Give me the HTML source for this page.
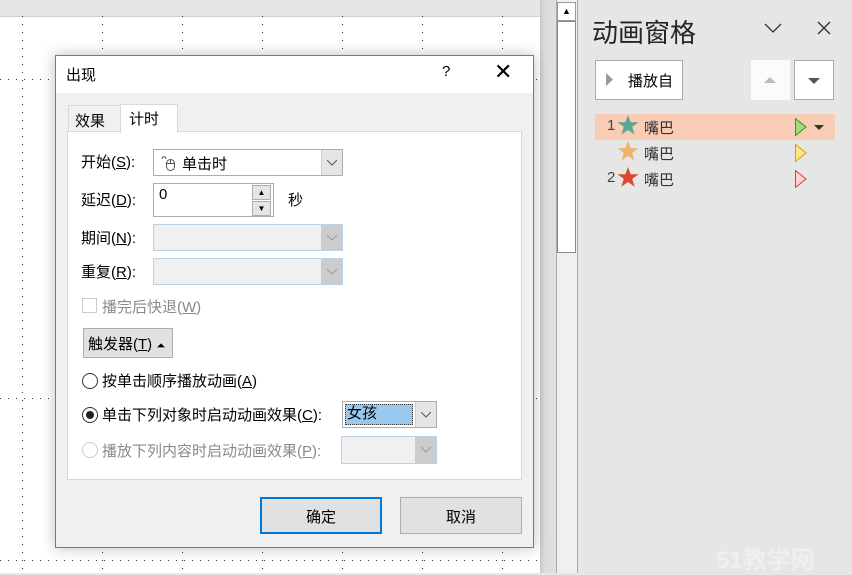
<!DOCTYPE html>
<html><head><meta charset="utf-8"><style>
*{box-sizing:border-box;margin:0;padding:0}
body{width:852px;height:573px;overflow:hidden;background:#e6e6e6;font-family:"Liberation Sans","Noto Sans CJK SC",sans-serif;font-size:15px;color:#000;position:relative}
.a{position:absolute}
u{text-decoration:underline}
.canvas{left:0;top:16px;width:540px;height:557px;background:#fff;border-top:1px solid #d0d0d0}
.vd{width:1px;top:16px;height:557px;background:repeating-linear-gradient(to bottom,#333 0 1px,transparent 1px 8px)}
.hd{height:1px;left:0;width:540px;background:repeating-linear-gradient(to right,#333 0 1px,transparent 1px 8px)}
.dlg{left:55px;top:55px;width:479px;height:493px;background:#f0f0f0;border:1px solid #7a7a7a;box-shadow:0 0 14px rgba(0,0,0,.25)}
.combo{border:1px solid #adadad;background:#fff}
.dis{border:1px solid #b9d1ea;background:#f0f0f0}
.arr{position:absolute;right:0;top:0;bottom:0;width:21px;background:#e5e5e5;border-left:1px solid #d0d0d0;display:flex;align-items:center;justify-content:center}
.rad{width:16px;height:16px;border:1px solid #333;border-radius:50%;background:#fff}
.btn{border:1px solid #adadad;background:#e1e1e1;text-align:center}
</style></head><body>
<div class="a canvas"></div>
<div class="a vd" style="left:22px"></div><div class="a vd" style="left:102px"></div><div class="a vd" style="left:182px"></div><div class="a vd" style="left:262px"></div><div class="a vd" style="left:342px"></div><div class="a vd" style="left:422px"></div><div class="a vd" style="left:502px"></div>
<div class="a hd" style="top:79px"></div><div class="a hd" style="top:398px"></div><div class="a hd" style="top:560px"></div>
<div class="a" style="left:540px;top:0;width:16px;height:573px;background:linear-gradient(to right,#c8c8c8,#dcdcdc 30%,#e0e0e0)"></div>
<div class="a" style="left:556px;top:0;width:22px;height:573px;background:#f0f0f0;border-left:1px solid #aaa;border-right:1px solid #aaa"></div>
<div class="a" style="left:557px;top:2px;width:19px;height:19px;background:#fff;border:1px solid #999;font-size:9px;text-align:center;line-height:17px">▲</div>
<div class="a" style="left:557px;top:21px;width:19px;height:232px;background:#fff;border:1px solid #888"></div>

<div class="a dlg">
 <div class="a" style="left:0;top:0;width:477px;height:37px;background:#fff"></div>
 <div class="a" style="left:10px;top:8px;font-size:15px">出现</div>
 <div class="a" style="left:386px;top:7px;font-size:15px">?</div>
 <div class="a" style="left:438px;top:3px;font-size:22px;font-weight:200">✕</div>
 <div class="a" style="left:12px;top:49px;width:53px;height:27px;border:1px solid #d9d9d9;border-bottom:none;padding:4px 0 0 6px;background:#f0f0f0">效果</div>
 <div class="a" style="left:64px;top:48px;width:58px;height:29px;border:1px solid #d9d9d9;border-bottom:none;background:#fff;padding:3px 0 0 8px;z-index:2">计时</div>
 <div class="a" style="left:11px;top:75px;width:455px;height:349px;background:#fff;border:1px solid #d9d9d9"></div>
 <div class="a" style="left:25px;top:95px">开始(<u>S</u>):</div>
 <div class="a combo" style="left:97px;top:93px;width:190px;height:27px"><svg class="a" style="left:7px;top:4px" width="16" height="18" viewBox="0 0 16 18" fill="none" stroke="#555"><rect x="5.5" y="5.5" width="8" height="11" rx="4"/><path d="M9.5 5.5v4M5.5 9.5h8M1 5c0-3 4-3 4 0"/></svg><span class="a" style="left:28px;top:3px">单击时</span><div class="arr"><svg width="10" height="6"><path d="M0 0l5 5 5-5" fill="none" stroke="#555"/></svg></div></div>
 <div class="a" style="left:25px;top:133px">延迟(<u>D</u>):</div>
 <div class="a combo" style="left:97px;top:127px;width:121px;height:34px"><span class="a" style="left:5px;top:2px">0</span>
  <div class="a" style="right:2px;top:1px;width:19px;height:15px;background:#e5e5e5;border:1px solid #adadad;font-size:8px;text-align:center;line-height:13px">▲</div>
  <div class="a" style="right:2px;top:17px;width:19px;height:15px;background:#e5e5e5;border:1px solid #adadad;font-size:8px;text-align:center;line-height:13px">▼</div></div>
 <div class="a" style="left:232px;top:133px">秒</div>
 <div class="a" style="left:25px;top:171px">期间(<u>N</u>):</div>
 <div class="a dis" style="left:97px;top:168px;width:190px;height:27px"><div class="arr" style="background:#ccc;border:none"><svg width="10" height="6"><path d="M0 0l5 5 5-5" fill="none" stroke="#999"/></svg></div></div>
 <div class="a" style="left:25px;top:205px">重复(<u>R</u>):</div>
 <div class="a dis" style="left:97px;top:202px;width:190px;height:27px"><div class="arr" style="background:#ccc;border:none"><svg width="10" height="6"><path d="M0 0l5 5 5-5" fill="none" stroke="#999"/></svg></div></div>
 <div class="a" style="left:26px;top:242px;width:15px;height:15px;border:1px solid #ccc;background:#fff"></div>
 <div class="a" style="left:46px;top:240px;color:#8a8a8a">播完后快退(<u>W</u>)</div>
 <div class="a btn" style="left:27px;top:272px;width:90px;height:30px;padding-top:4px;text-align:left;padding-left:4px">触发器(<u>T</u>) <span style="font-size:11px">⏶</span></div>
 <div class="a rad" style="left:26px;top:317px"></div>
 <div class="a" style="left:46px;top:314px">按单击顺序播放动画(<u>A</u>)</div>
 <div class="a rad" style="left:26px;top:351px"><div class="a" style="left:3px;top:3px;width:8px;height:8px;border-radius:50%;background:#222"></div></div>
 <div class="a" style="left:46px;top:348px">单击下列对象时启动动画效果(<u>C</u>):</div>
 <div class="a combo" style="left:286px;top:345px;width:95px;height:27px"><div class="a" style="left:2px;top:2px;width:68px;height:21px;background:#99c9ef;border:1px dotted #333;padding:0 0 0 1px;line-height:18px">女孩</div><div class="arr" style="background:#e5e5e5"><svg width="10" height="6"><path d="M0 0l5 5 5-5" fill="none" stroke="#555"/></svg></div></div>
 <div class="a rad" style="left:26px;top:386px;border-color:#ccc"></div>
 <div class="a" style="left:46px;top:384px;color:#8a8a8a">播放下列内容时启动动画效果(<u>P</u>):</div>
 <div class="a dis" style="left:285px;top:380px;width:96px;height:28px"><div class="arr" style="background:#ccc;border:none"><svg width="10" height="6"><path d="M0 0l5 5 5-5" fill="none" stroke="#999"/></svg></div></div>
 <div class="a btn" style="left:204px;top:441px;width:122px;height:37px;border:2px solid #0078d7;padding-top:7px">确定</div>
 <div class="a btn" style="left:344px;top:441px;width:122px;height:37px;padding-top:8px">取消</div>
</div>

<div class="a" style="left:592px;top:13px;font-size:26px;color:#262626">动画窗格</div>
<svg class="a" style="left:764px;top:23px" width="18" height="10"><path d="M1 1l8 8 8-8" fill="none" stroke="#333" stroke-width="1.3"/></svg>
<svg class="a" style="left:817px;top:21px" width="14" height="14"><path d="M1 1l12 12M13 1L1 13" stroke="#333" stroke-width="1.3"/></svg>
<div class="a" style="left:595px;top:60px;width:88px;height:40px;background:#fff;border:1px solid #ababab"><svg class="a" style="left:10px;top:12px" width="8" height="13"><path d="M0 0l7 6.5L0 13z" fill="#9a9a9a"/></svg><span class="a" style="left:32px;top:9px">播放自</span></div>
<div class="a" style="left:751px;top:60px;width:39px;height:40px;background:#fbfbfb"><svg class="a" style="left:13px;top:17px" width="12" height="6"><path d="M0 6L6 0l6 6z" fill="#bbb"/></svg></div>
<div class="a" style="left:794px;top:60px;width:40px;height:40px;background:#fff;border:1px solid #ababab"><svg class="a" style="left:13px;top:17px" width="12" height="6"><path d="M0 0h12L6 6z" fill="#555"/></svg></div>
<div class="a" style="left:595px;top:114px;width:240px;height:26px;background:#f9ccb5"></div>
<div class="a" style="left:607px;top:117px;color:#444">1</div>
<div class="a" style="left:607px;top:169px;color:#444">2</div>
<svg class="a" style="left:617px;top:115px" width="22" height="21" viewBox="0 0 20 19"><path d="M10 0l2.4 6.6H19.5l-5.7 4.2 2.2 7L10 13.6 4 17.8l2.2-7L.5 6.6h7.1z" fill="#5aa793"/></svg>
<svg class="a" style="left:617px;top:141px" width="22" height="21" viewBox="0 0 20 19"><path d="M10 0l2.4 6.6H19.5l-5.7 4.2 2.2 7L10 13.6 4 17.8l2.2-7L.5 6.6h7.1z" fill="#edb46a"/></svg>
<svg class="a" style="left:617px;top:167px" width="22" height="21" viewBox="0 0 20 19"><path d="M10 0l2.4 6.6H19.5l-5.7 4.2 2.2 7L10 13.6 4 17.8l2.2-7L.5 6.6h7.1z" fill="#d9482b"/></svg>
<div class="a" style="left:644px;top:117px;color:#333">嘴巴</div>
<div class="a" style="left:644px;top:143px;color:#333">嘴巴</div>
<div class="a" style="left:644px;top:169px;color:#333">嘴巴</div>
<svg class="a" style="left:795px;top:118px" width="12" height="18"><path d="M.5 .5L11 9 .5 17.5z" fill="#9fdc7c" stroke="#3f8f2f"/></svg>
<svg class="a" style="left:814px;top:125px" width="10" height="5"><path d="M0 0h10L5 5z" fill="#333"/></svg>
<svg class="a" style="left:795px;top:144px" width="12" height="18"><path d="M.5 .5L11 9 .5 17.5z" fill="#ffe680" stroke="#d9a000"/></svg>
<svg class="a" style="left:795px;top:170px" width="12" height="18"><path d="M.5 .5L11 9 .5 17.5z" fill="#ffd0d0" stroke="#d04050"/></svg>
<div class="a" style="left:716px;top:540px;font-size:24px;font-weight:bold;color:#efefef">51教学网</div>
</body></html>
